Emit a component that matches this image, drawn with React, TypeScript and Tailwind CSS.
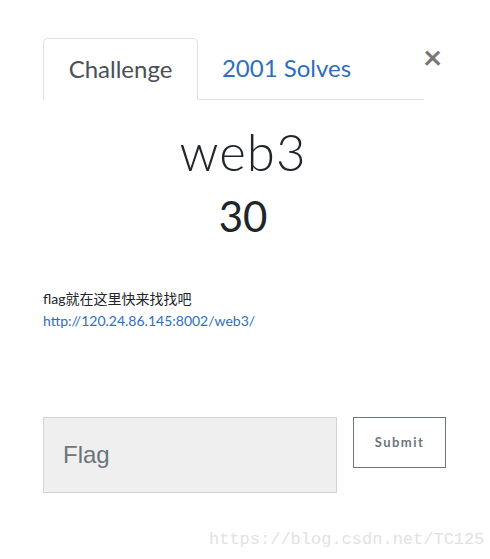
export default function App() {
  return (
    <div className="relative w-[490px] h-[559px] bg-white font-['Lato',sans-serif] text-[#212529] overflow-hidden">
      <div className="px-[43px] pt-[38px]">
        {/* Tabs */}
        <div className="flex items-end border-b border-[#dee2e6] h-[62px] w-[381px]">
          <div className="w-[155px] h-[62px] border border-[#dee2e6] border-b-white -mb-px rounded-t-[5px] bg-white flex items-center justify-center text-[24px] text-[#495057]">
            Challenge
          </div>
          <div className="w-[177px] h-[62px] flex items-center justify-center text-[24px] text-[#2e6dbf]">
            2001 Solves
          </div>
        </div>

        {/* Title */}
        <div className="flex flex-col items-center mt-[22px] pr-[4px]">
          <div className="text-[51px] leading-[60px] font-light tracking-[1px] text-[#212529]">web3</div>
          <div className="text-[42px] leading-[50px] font-normal text-[#212529] mt-[9px]">30</div>
        </div>

        {/* Description */}
        <div className="mt-[47px] text-[14px] leading-[22px]">
          <div className="font-['Lato','Noto_Sans_CJK_SC',sans-serif]">flag就在这里快来找找吧</div>
          <a className="text-[#2e6dbf] block">http://120.24.86.145:8002/web3/</a>
        </div>
      </div>

      {/* Form */}
      <div className="absolute left-[43px] top-[417px] flex gap-[16px] items-start">
        <div className="w-[294px] h-[76px] bg-[#efefef] border border-[#cfd3dc] flex items-center pl-[19px] text-[24px] text-[#6c757d] font-['Liberation_Sans',sans-serif]">
          Flag
        </div>
        <button className="w-[93px] h-[51px] border border-[#6c757d] bg-white text-[13px] font-bold tracking-[1.5px] text-[#6c757d]">
          Submit
        </button>
      </div>

      {/* Close */}
      <div className="absolute left-[423px] top-[41px] text-[33px] leading-[30px] font-bold text-[#777]">×</div>

      {/* Watermark */}
      <div className="absolute left-[209px] top-[527px] font-['Liberation_Mono',monospace] text-[17px] text-[#e2e2e2]">
        https://blog.csdn.net/TC125
      </div>
    </div>
  );
}
